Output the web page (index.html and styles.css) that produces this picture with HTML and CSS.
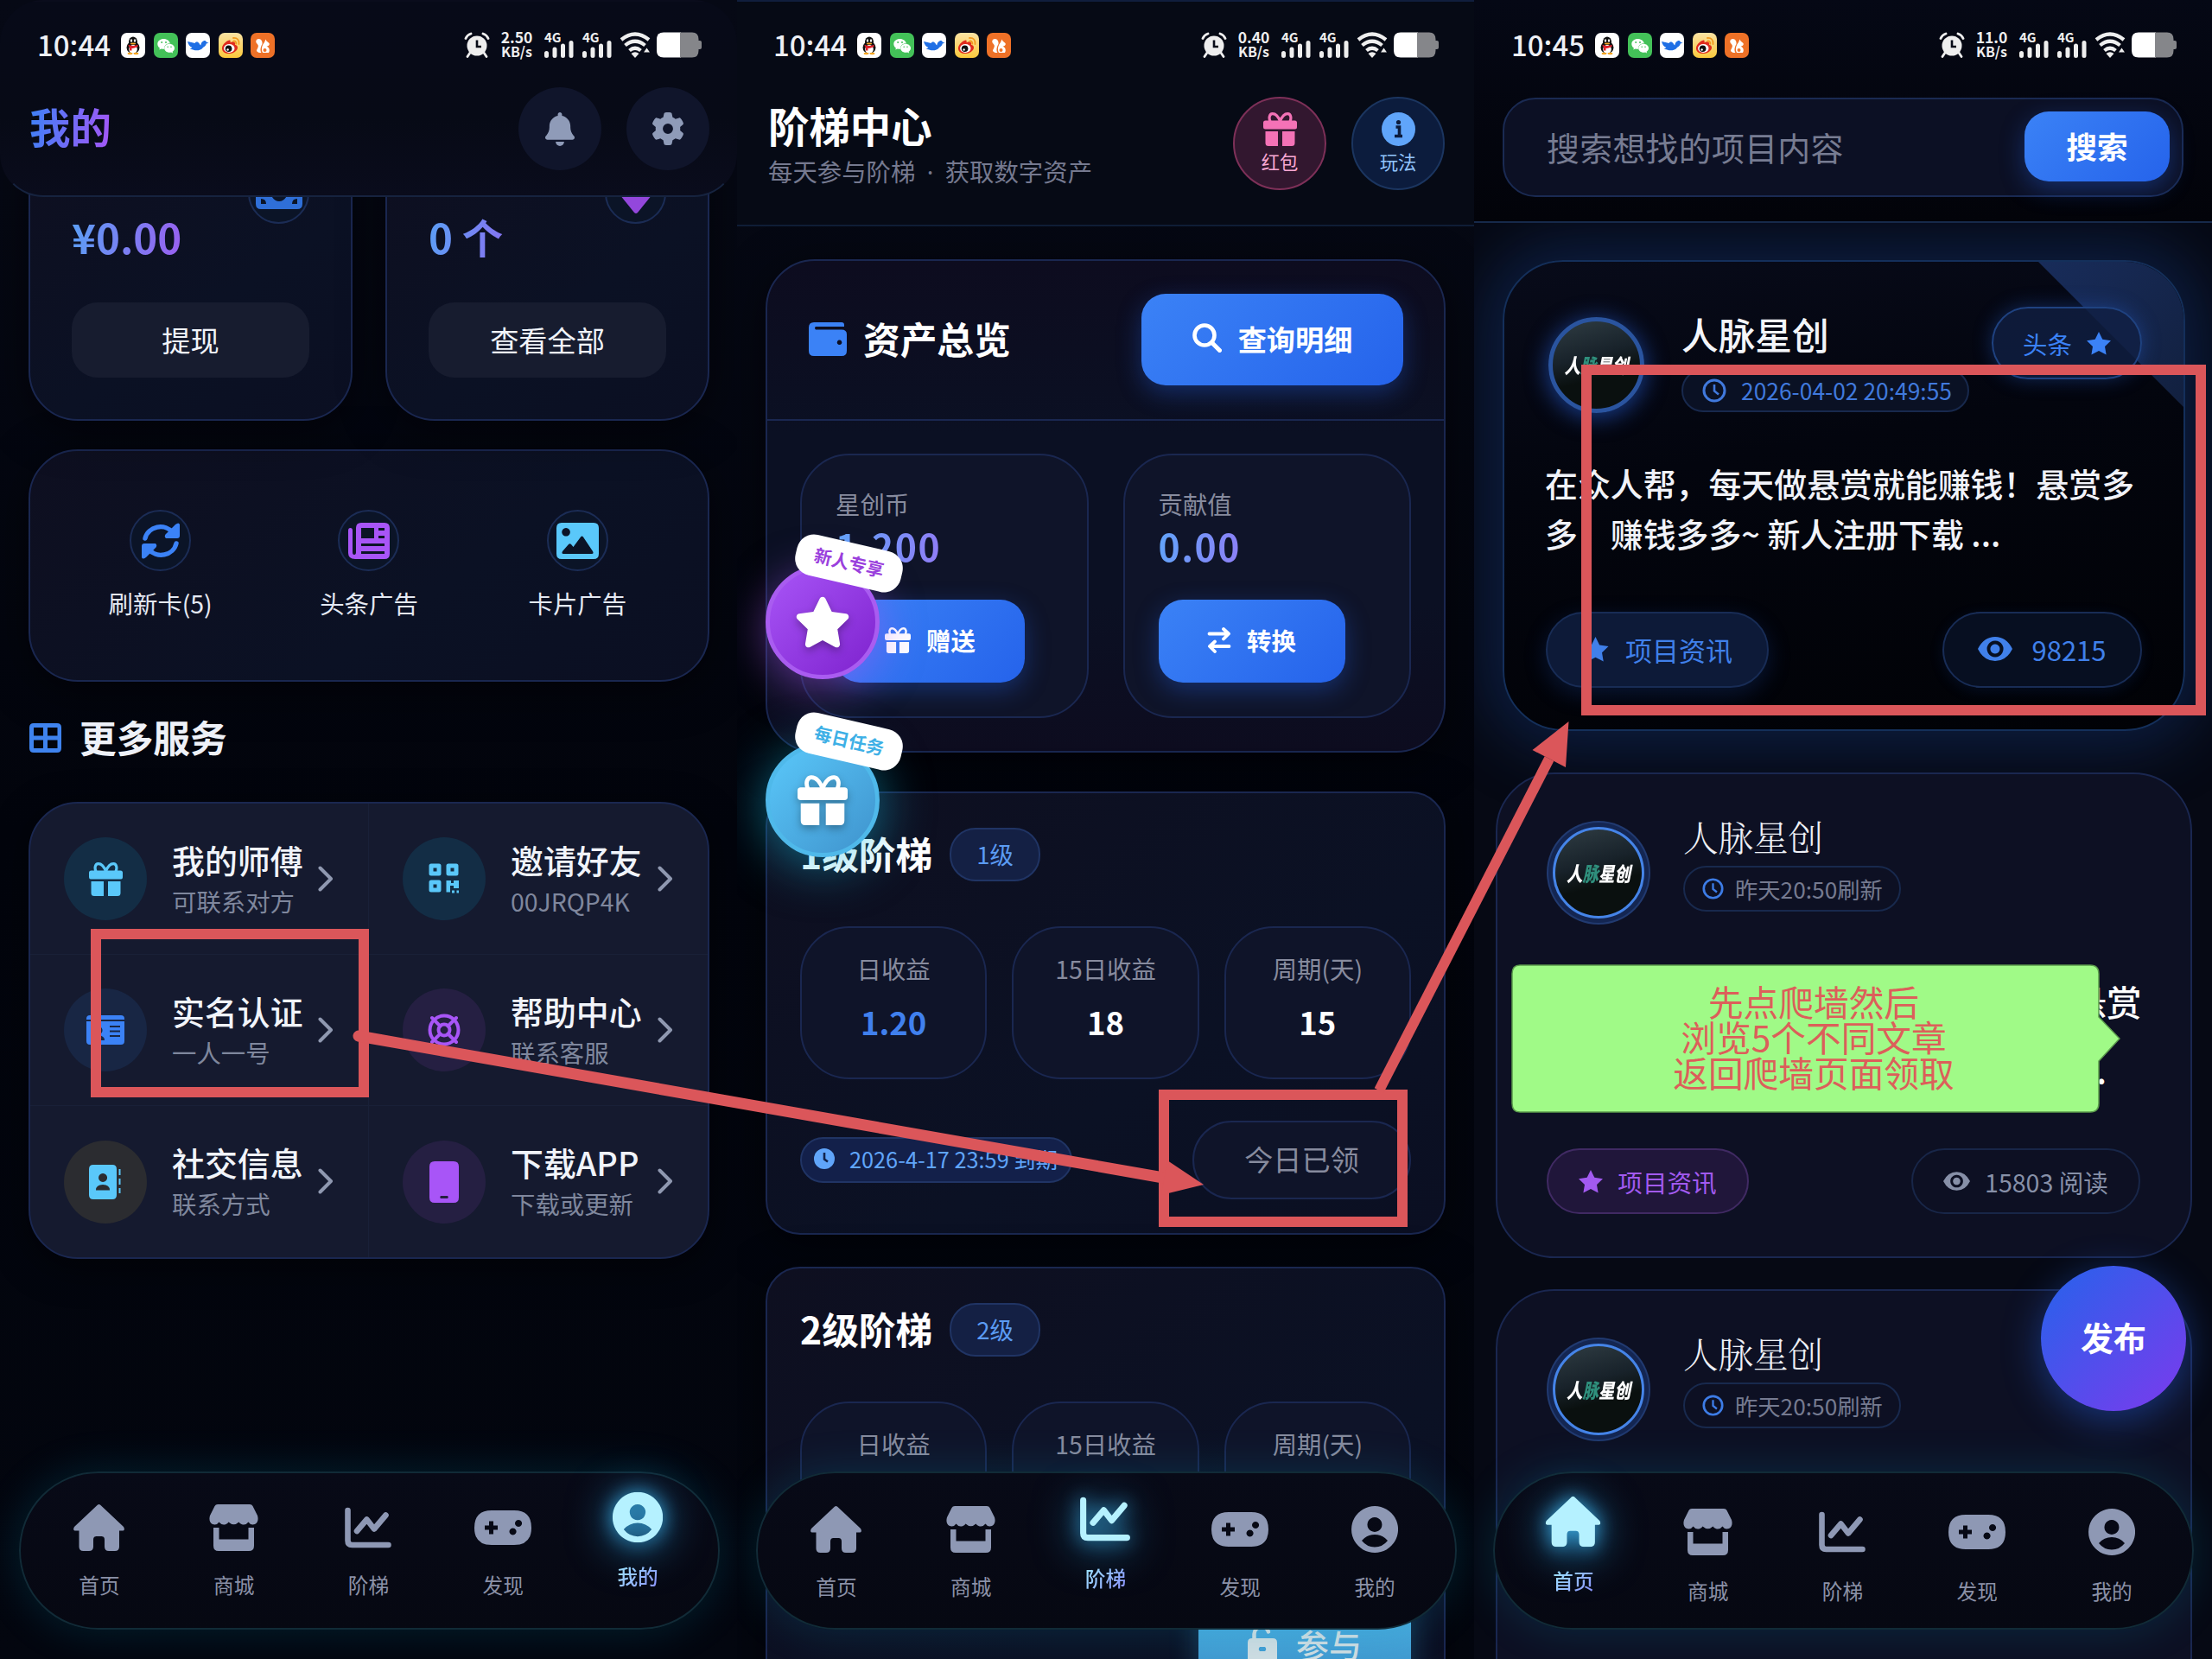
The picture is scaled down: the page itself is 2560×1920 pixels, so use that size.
FILE: index.html
```html
<!DOCTYPE html>
<html lang="zh-CN">
<head>
    <meta charset="UTF-8">
    <meta name="viewport" content="width=device-width, initial-scale=1.0">
    <title>人脉星创</title>
    <link rel="stylesheet" href="styles.css">
</head>
<body>
    <!-- Icon set -->
    <svg class="sprite" width="0" height="0">
        <symbol id="i-qq" viewBox="0 0 28 28">
            <ellipse cx="14" cy="16.500" rx="7.500" ry="7" fill="#111"/>
            <ellipse cx="14" cy="10" rx="5" ry="6" fill="#111"/>
            <ellipse cx="14" cy="18.500" rx="4.800" ry="5" fill="#fff"/>
            <ellipse cx="12" cy="8.500" rx="1.200" ry="1.700" fill="#fff"/>
            <ellipse cx="16" cy="8.500" rx="1.200" ry="1.700" fill="#fff"/>
            <ellipse cx="14" cy="12" rx="3.200" ry="1" fill="#f5a623"/>
            <path d="M8.500 13.200Q14 16 19.500 13.200V15.500Q14 18 12.500 17.300V20H10V16Q8.500 15.500 8.500 13.200Z" fill="#e0202a"/>
            <ellipse cx="10.500" cy="23.500" rx="3" ry="1.300" fill="#f5a623"/>
            <ellipse cx="17.500" cy="23.500" rx="3" ry="1.300" fill="#f5a623"/>
        </symbol>
        <symbol id="i-wechat" viewBox="0 0 28 28">
            <path d="M11.500 6.500c-4 0-7.200 2.600-7.200 5.900 0 1.900 1 3.500 2.600 4.600l-.6 2.100 2.400-1.200c.9.2 1.800.4 2.800.4h.6c-.7-4 3-6.700 6.700-6.500-.5-3-3.600-5.300-7.300-5.300z" fill="#fff"/>
            <path d="M24 17.300c0-2.800-2.700-5-5.900-5s-5.900 2.200-5.900 5 2.600 5 5.900 5c.7 0 1.400-.1 2-.3l2 1-.5-1.800c1.500-.9 2.400-2.300 2.400-3.900z" fill="#fff"/>
            <circle cx="9.200" cy="10.500" r="1" fill="#43c158"/><circle cx="14" cy="10.500" r="1" fill="#43c158"/>
            <circle cx="16.200" cy="15.800" r=".8" fill="#43c158"/><circle cx="20" cy="15.800" r=".8" fill="#43c158"/>
        </symbol>
        <symbol id="i-bird" viewBox="0 0 28 28">
            <path d="M2 9.500c3 1 6 1 8.500 2 1-1.500 2.500-1.800 3.800-1 1.500.9 1.700 2.500 3 3.500.2-2 1-4.400 3.500-5.300 1.500-.5 2.700.3 3.200 1.500l2.500 1-2.800.8c-.3 2-1.600 3.500-3.500 4.200-2 3-6 4-9.500 3.500-2.500-.6-4-1.500-6-1.500 1-.4 2-.9 2.700-1.600C4.500 15.500 3 13 2 9.500z" fill="#1f6fe5"/>
        </symbol>
        <symbol id="i-weibo" viewBox="0 0 28 28">
            <path d="M12.500 8c-4 .8-9 6-8.500 10 .6 4.500 5 6 9 5.500 5-.6 9-3.500 9-7 0-2-1.500-2.800-3-3.300.6-1.700 0-3-1.500-3.300-1.200-.2-2.600.2-4 .8.400-1.700.2-3-1-2.700z" fill="#e02b1d"/>
            <ellipse cx="12.300" cy="17.500" rx="6.200" ry="4.900" fill="#fff"/>
            <circle cx="11.600" cy="17.800" r="3.800" fill="#111"/><circle cx="10.600" cy="19" r="1.200" fill="#fff"/>
            <path d="M17 5.500q7-.5 6.500 7M17.500 9q3 0 2.800 3" fill="none" stroke="#f39a1e" stroke-width="1.800" stroke-linecap="round"/>
        </symbol>
        <symbol id="i-uc" viewBox="0 0 28 28">
            <path d="M13.500 12.500C14 10 12.500 6.500 9.500 6.500S5.500 9.500 7 11.500 9.500 14 8.500 16.500 6 20 8 21.500 12 22.500 12.500 22.500C11 20.500 11 16.500 13.500 12.500Z" fill="#fff"/>
            <path d="M16 10.500L17.500 7 18.500 9 21.500 11.500C22.500 13.500 20.500 15 18.500 15 22 16.500 22.500 20 21 22.500H14C12 19 13 14 16 10.500Z" fill="#fff"/>
            <circle cx="16.500" cy="19.500" r="2" fill="#f0742a"/>
        </symbol>
        <symbol id="i-alarm" viewBox="0 0 30 30">
            <circle cx="15" cy="16" r="11.500" fill="#eee"/>
            <path d="M2 7.500Q3.500 3.500 8 2M28 7.500Q26.500 3.500 22 2M7 24l-3 4.500M23 24l3 4.500" stroke="#eee" stroke-width="2.800" stroke-linecap="round" fill="none"/>
            <path d="M15 9.500V17h5" stroke="#080c18" stroke-width="2.600" fill="none"/>
        </symbol>
        <symbol id="i-bars" viewBox="0 0 34 20">
            <path d="M2.500 14.500V17.500M12 10V17.500M21.500 6V17.500M31 2.500V17.500" stroke="#eee" stroke-width="5" stroke-linecap="round"/>
        </symbol>
        <symbol id="i-wifi" viewBox="0 0 36 30">
            <path d="M2 9Q18-4 34 9M6.500 15.500Q18 6 29.500 15.500M11.500 21.500Q18 16 24.500 21.500" stroke="#eee" stroke-width="4.200" fill="none"/>
            <path d="M13.500 25Q18 21.500 22.500 25L18 30Z" fill="#eee"/>
            <path d="M28 23.500L31.500 18.500 35 23.500Z" fill="#eee"/>
        </symbol>
        <symbol id="i-battery" viewBox="0 0 52 30">
            <path d="M8 .5H28V29.500H8Q0 29.500 0 21.500V8.500Q0 .5 8 .5Z" fill="#fff"/>
            <path d="M27 .5H41Q48.500 .5 48.500 8.500V10H50Q52 10 52 12V18Q52 20 50 20H48.500V21.500Q48.500 29.500 41 29.500H27Z" fill="#85868a"/>
        </symbol>

        <symbol id="i-home" viewBox="0 0 59 54">
            <path d="M29.500 0Q31 0 32 1.500L58 26Q60.500 30.500 56 30.500H53V49Q53 54 48 54H41Q36 54 36 49V41Q36 37 32.500 37H26.500Q23 37 23 41V49Q23 54 18 54H11.500Q6.500 54 6.500 49V30.500H3Q-1.500 30.500 1 26L27 1.500Q28 0 29.500 0Z"/>
        </symbol>
        <symbol id="i-store" viewBox="0 0 57 54">
            <path d="M10 0H47Q49.500 0 50.500 2L56 13Q58 20 53 23Q48 24.500 45.500 20.500Q42 25 37.500 23Q35.500 22 34.500 20.500Q28.500 26 22.500 20.500Q21.500 22 19.500 23Q15 25 11.500 20.500Q9 24.500 4 23Q-1 20 1 13L6.500 2Q7.500 0 10 0Z"/>
            <path d="M5 27H11.500V40.500H45.500V27H52V48Q52 54 46 54H11Q5 54 5 48Z"/>
        </symbol>
        <symbol id="i-chart" viewBox="0 0 54 54">
            <path d="M3.500 7V42Q3.500 47 8.500 47H50.500M14 31L25.500 17.500 34 28.500 47.500 12.500" fill="none" stroke="currentColor" stroke-width="6.600" stroke-linecap="round" stroke-linejoin="round"/>
        </symbol>
        <symbol id="i-game" viewBox="0 0 66 54">
            <path fill-rule="evenodd" d="M20 7H46Q66 7 66 27T46 47H20Q0 47 0 27T20 7ZM17 19.500V24.500H12V29.500H17V34.500H22V29.500H27V24.500H22V19.500ZM51 18a4 4 0 1 0 .1 0ZM44.500 27.500a4 4 0 1 0 .1 0Z"/>
        </symbol>
        <symbol id="i-user" viewBox="0 0 54 54">
            <path fill-rule="evenodd" d="M27 0a27 27 0 1 0 .1 0ZM27 13a8.500 8.500 0 1 1-.1 0ZM27 33Q36 33 42 40Q36 47.500 27 47.500T12 40Q18 33 27 33Z"/>
        </symbol>
        <symbol id="i-gift" viewBox="0 0 39 39">
            <path d="M19.500 10.500C17 4 13.500 1.500 10.500 1.700S6 6 8 10.500M19.500 10.500C22 4 25.500 1.500 28.500 1.700S33 6 31 10.500" fill="none" stroke="currentColor" stroke-width="3.200"/>
            <rect y="9.500" width="39" height="10" rx="2.500"/>
            <path d="M2.500 22H17V39H6Q2.500 39 2.500 35.500ZM22 22H36.500V35.500Q36.500 39 33 39H22Z"/>
        </symbol>
        <symbol id="i-bell" viewBox="0 0 448 512">
            <path d="M224 0c-17.700 0-32 14.300-32 32V51.200C119 66 64 130.600 64 208v18.800c0 47-17.300 92.400-48.500 127.600l-7.400 8.300c-8.400 9.400-10.400 22.900-5.300 34.400S19.400 416 32 416H416c12.600 0 24-7.400 29.200-18.900s3.100-25-5.300-34.400l-7.400-8.300C401.300 319.200 384 273.900 384 226.800V208c0-77.400-55-142-128-156.800V32c0-17.700-14.300-32-32-32zm45.300 493.300c12-12 18.700-28.300 18.700-45.300H160c0 17 6.700 33.300 18.700 45.300s28.300 18.700 45.300 18.700s33.300-6.700 45.300-18.700z"/>
        </symbol>
        <symbol id="i-gear" viewBox="0 0 512 512">
            <path d="M495.900 166.600c3.200 8.700 .5 18.400-6.400 24.600l-43.300 39.400c1.100 8.300 1.700 16.800 1.700 25.400s-.6 17.100-1.700 25.400l43.300 39.400c6.900 6.200 9.600 15.900 6.400 24.600c-4.400 11.900-9.700 23.300-15.800 34.300l-4.700 8.100c-6.600 11-14 21.400-22.100 31.200c-5.900 7.200-15.700 9.600-24.500 6.800l-55.700-17.700c-13.400 10.300-28.200 18.900-44 25.400l-12.500 57.100c-2 9.100-9 16.300-18.200 17.800c-13.800 2.300-28 3.500-42.500 3.500s-28.700-1.200-42.500-3.500c-9.200-1.500-16.200-8.700-18.200-17.800l-12.500-57.100c-15.800-6.500-30.600-15.100-44-25.400L83.100 425.900c-8.800 2.800-18.600 .3-24.500-6.800c-8.100-9.800-15.500-20.200-22.100-31.200l-4.700-8.100c-6.100-11-11.400-22.400-15.800-34.300c-3.200-8.700-.5-18.400 6.400-24.600l43.300-39.400C64.600 273.100 64 264.600 64 256s.6-17.100 1.700-25.400L22.400 191.200c-6.900-6.200-9.600-15.900-6.400-24.600c4.400-11.900 9.700-23.300 15.800-34.300l4.700-8.100c6.600-11 14-21.400 22.100-31.200c5.900-7.200 15.700-9.600 24.500-6.800l55.700 17.700c13.400-10.300 28.200-18.900 44-25.400l12.500-57.100c2-9.100 9-16.300 18.200-17.800C227.300 1.200 241.500 0 256 0s28.700 1.200 42.500 3.500c9.200 1.500 16.200 8.700 18.200 17.800l12.500 57.100c15.800 6.500 30.600 15.100 44 25.400l55.700-17.700c8.800-2.800 18.600-.3 24.500 6.800c8.100 9.800 15.500 20.200 22.100 31.200l4.700 8.100c6.100 11 11.400 22.400 15.800 34.300zM256 336a80 80 0 1 0 0-160 80 80 0 1 0 0 160z"/>
        </symbol>
        <symbol id="i-cash" viewBox="0 0 54 36">
            <path fill-rule="evenodd" d="M6 0H48Q54 0 54 6V30Q54 36 48 36H6Q0 36 0 30V6Q0 0 6 0ZM6 24V30H12Q12 24 6 24ZM42 30H48V24Q42 24 42 30ZM27 9a9 9 0 1 0 .1 0Z"/>
        </symbol>
        <symbol id="i-gem" viewBox="0 0 54 46">
            <path d="M11 0H43L54 14 29 45Q27 47 25 45L0 14Z"/>
        </symbol>
        <symbol id="i-rotate" viewBox="0 0 46 42">
            <path d="M5 18A18 17 0 0 1 37 11.500M41 24A18 17 0 0 1 9 30.500" fill="none" stroke="currentColor" stroke-width="5.400" stroke-linecap="round"/>
            <path d="M45 2V15Q45 18 42 18H29Q26 15 30 12L40 2Q44-1 45 2ZM1 40V27Q1 24 4 24H17Q20 27 16 30L6 40Q2 43 1 40Z"/>
        </symbol>
        <symbol id="i-news" viewBox="0 0 48 42">
            <path fill-rule="evenodd" d="M15 0H42Q48 0 48 6V36Q48 42 42 42H8Q0 42 0 35V9Q0 6 2.500 6T5 9V34Q5 37 7 37T9 34V6Q9 0 15 0ZM15 6V18H30V6ZM35 6V9H42V6ZM35 15V18H42V15ZM15 24V27H42V24ZM15 33V36H42V33Z"/>
        </symbol>
        <symbol id="i-image" viewBox="0 0 49 42">
            <path fill-rule="evenodd" d="M6 0H43Q49 0 49 6V36Q49 42 43 42H6Q0 42 0 36V6Q0 0 6 0ZM11 6a4.800 4.800 0 1 0 .1 0ZM8 36H41Q43.500 36 42 33L31 16.500Q29.500 14.500 28 16.500L19.500 28 17 25Q15.500 23.500 14 25L7 33Q5.500 36 8 36Z"/>
        </symbol>
        <symbol id="i-grid" viewBox="0 0 37 34">
            <path fill-rule="evenodd" d="M5 0H32Q37 0 37 5V29Q37 34 32 34H5Q0 34 0 29V5Q0 0 5 0ZM5 5V14.500H16V5ZM21 5V14.500H32.500V5ZM5 19.500V29H16V19.500ZM21 19.500V29H32.500V19.500Z"/>
        </symbol>
        <symbol id="i-qr" viewBox="0 0 36 36">
            <path d="M3 3H12V12H3ZM23 3H32V12H23ZM3 22H12V31H3Z" fill="none" stroke="currentColor" stroke-width="5" stroke-linejoin="round"/>
            <path d="M20.500 20H26V23H29V20H35V29H29V26H25V33.500H20.500ZM27 31.500H30V34.500H27ZM32.500 31.500H35V34.500H32.500Z"/>
        </symbol>
        <symbol id="i-idcard" viewBox="0 0 44 34">
            <path fill-rule="evenodd" d="M4 0H40Q44 0 44 4V5H0V4Q0 0 4 0ZM0 7H44V30Q44 34 40 34H4Q0 34 0 30ZM14 13a4.500 4.500 0 1 0 .1 0ZM7 29H21Q21 23.500 14 23.500T7 29ZM27 12V14H39V12ZM27 17.500V19.500H39V17.500ZM27 23V25H39V23Z"/>
        </symbol>
        <symbol id="i-ring" viewBox="0 0 40 40">
            <g fill="none" stroke="currentColor" stroke-width="4">
                <circle cx="20" cy="20" r="16.500"/><circle cx="20" cy="20" r="6.500"/>
                <path d="M6 6L15.500 15.500M34 6L24.500 15.500M6 34L15.500 24.500M34 34L24.500 24.500" stroke-linecap="round"/>
            </g>
        </symbol>
        <symbol id="i-book" viewBox="0 0 38 40">
            <path fill-rule="evenodd" d="M5 0H27Q32 0 32 5V35Q32 40 27 40H5Q0 40 0 35V5Q0 0 5 0ZM16 10a5 5 0 1 0 .1 0ZM8 29.500H24Q24 23 16 23T8 29.500ZM34.500 5h2v7h-2ZM34.500 16h2v7h-2ZM34.500 27h2v6h-2Z"/>
        </symbol>
        <symbol id="i-phone" viewBox="0 0 34 48">
            <path fill-rule="evenodd" d="M6 0H28Q34 0 34 6V42Q34 48 28 48H6Q0 48 0 42V6Q0 0 6 0ZM13 40Q11.500 41.500 13 43H21Q22.500 41.500 21 40Z"/>
        </symbol>
        <symbol id="i-chevron" viewBox="0 0 18 30">
            <path d="M2.500 2.500L15 15 2.500 27.500" fill="none" stroke="currentColor" stroke-width="4" stroke-linecap="round" stroke-linejoin="round"/>
        </symbol>
        <symbol id="i-info" viewBox="0 0 39 39">
            <circle cx="19.500" cy="19.500" r="19.500"/>
            <path d="M16.500 17H20.500V27M15 27.500H24" fill="none" stroke="#0c1c3d" stroke-width="3.600"/><circle cx="19.500" cy="11.500" r="2.600" fill="#0c1c3d"/>
        </symbol>
        <symbol id="i-wallet" viewBox="0 0 44 39">
            <path fill-rule="evenodd" d="M6 0H38Q41 0 41 3V5H8Q6 6.500 8 8.500H38Q44 8.500 44 14V33Q44 39 38 39H6Q0 39 0 33V6Q0 0 6 0ZM35.500 20.500a2.800 2.800 0 1 0 .1 0Z"/>
        </symbol>
        <symbol id="i-search" viewBox="0 0 34 34">
            <circle cx="14" cy="14" r="11.500" fill="none" stroke="currentColor" stroke-width="4.600"/><path d="M23 23L31.500 31.500" stroke="currentColor" stroke-width="5" stroke-linecap="round"/>
        </symbol>
        <symbol id="i-swap" viewBox="0 0 28 30">
            <path d="M2.500 7.500H24M19 2L25 7.500 19 13.500M25.500 22H4M9 16.500L3 22 9 28" fill="none" stroke="currentColor" stroke-width="3.800" stroke-linecap="round" stroke-linejoin="round"/>
        </symbol>
        <symbol id="i-star" viewBox="0 0 576 512">
            <path d="M316.900 18C311.600 7 300.400 0 288.100 0s-23.400 7-28.800 18L195 150.300 51.400 171.500c-12 1.800-22 10.200-25.700 21.700s-.7 24.200 7.900 32.700L137.800 329 113.200 474.700c-2 12 3 24.200 12.900 31.300s23 8 33.800 2.300l128.300-68.500 128.300 68.500c10.800 5.700 23.900 4.900 33.800-2.300s14.900-19.300 12.900-31.300L438.500 329 542.700 225.900c8.600-8.500 11.700-21.200 7.900-32.700s-13.700-19.900-25.700-21.700L381.200 150.300 316.900 18z"/>
        </symbol>
        <symbol id="i-star2" viewBox="0 0 28 27">
            <path d="M14 0L18.300 8.800 28 10.200 21 17 22.600 26.600 14 22 5.400 26.600 7 17 0 10.200 9.700 8.800Z"/>
        </symbol>
        <symbol id="i-clock" viewBox="0 0 28 28">
            <circle cx="14" cy="14" r="12" fill="none" stroke="currentColor" stroke-width="3"/><path d="M14 7V14.500L19 18.500" fill="none" stroke="currentColor" stroke-width="2.600"/>
        </symbol>
        <symbol id="i-clock-fill" viewBox="0 0 24 24">
            <circle cx="12" cy="12" r="12"/><path d="M12 5V12.500L16 15.500" fill="none" stroke="#13244d" stroke-width="2.600"/>
        </symbol>
        <symbol id="i-eye" viewBox="0 0 40 28">
            <path fill-rule="evenodd" d="M20 0Q33 0 40 14Q33 28 20 28T0 14Q7 0 20 0ZM20 4.500a9.500 9.500 0 1 0 .1 0ZM20 8.500a5.500 5.500 0 1 1-.1 0Z"/>
        </symbol>
        <symbol id="i-unlock" viewBox="0 0 36 44">
            <path d="M7.500 17V11A8.500 8.500 0 0 1 24 8.500" fill="none" stroke="currentColor" stroke-width="4.500" stroke-linecap="round"/>
            <path fill-rule="evenodd" d="M5 16H29Q34 16 34 21V39Q34 44 29 44H5Q0 44 0 39V21Q0 16 5 16ZM14 26Q11.500 28.500 14 31H20Q22.500 28.500 20 26Z"/>
        </symbol>
    </svg>

    <main class="board">
        <!-- 我的 -->
        <section class="phone phone-mine">
            <header class="top top-mine">
                <div class="status">
                    <span class="time">10:44</span>
                    <span class="app qq"><svg><use href="#i-qq"/></svg></span>
                    <span class="app wechat"><svg><use href="#i-wechat"/></svg></span>
                    <span class="app bird"><svg><use href="#i-bird"/></svg></span>
                    <span class="app weibo"><svg><use href="#i-weibo"/></svg></span>
                    <span class="app uc"><svg><use href="#i-uc"/></svg></span>
                    <svg class="alarm"><use href="#i-alarm"/></svg>
                    <span class="speed"><b>2.50</b><i>KB/s</i></span>
                    <span class="signal"><b>4G</b><svg><use href="#i-bars"/></svg></span>
                    <span class="signal"><b>4G</b><svg><use href="#i-bars"/></svg></span>
                    <svg class="wifi"><use href="#i-wifi"/></svg>
                    <svg class="battery"><use href="#i-battery"/></svg>
                </div>
                <div class="top-row">
                    <h1 class="grad">我的</h1>
                    <button class="round"><svg class="bell"><use href="#i-bell"/></svg></button>
                    <button class="round"><svg class="gear"><use href="#i-gear"/></svg></button>
                </div>
            </header>

            <div class="balance-row">
                <div class="card balance">
                    <span class="ring"><svg class="cash"><use href="#i-cash"/></svg></span>
                    <div class="amount"><span class="grad-soft">¥0.00</span></div>
                    <button class="ghost">提现</button>
                </div>
                <div class="card balance">
                    <span class="ring"><svg class="gem"><use href="#i-gem"/></svg></span>
                    <div class="amount"><span class="grad-soft wide">0 个</span></div>
                    <button class="ghost">查看全部</button>
                </div>
            </div>

            <div class="card ads">
                <div class="ad"><span class="ring blue"><svg width="46" height="42"><use href="#i-rotate"/></svg></span>刷新卡(5)</div>
                <div class="ad"><span class="ring purple"><svg width="48" height="42"><use href="#i-news"/></svg></span>头条广告</div>
                <div class="ad"><span class="ring sky"><svg width="49" height="42"><use href="#i-image"/></svg></span>卡片广告</div>
            </div>

            <h2 class="more"><svg width="37" height="34"><use href="#i-grid"/></svg>更多服务</h2>

            <div class="services">
                <div class="service">
                    <span class="disc teal"><svg width="39" height="39"><use href="#i-gift"/></svg></span>
                    <div class="service-text"><b>我的师傅</b><small>可联系对方</small></div>
                    <svg class="chevron"><use href="#i-chevron"/></svg>
                </div>
                <div class="service">
                    <span class="disc teal"><svg width="36" height="36"><use href="#i-qr"/></svg></span>
                    <div class="service-text"><b>邀请好友</b><small>00JRQP4K</small></div>
                    <svg class="chevron"><use href="#i-chevron"/></svg>
                </div>
                <div class="service">
                    <span class="disc navy"><svg width="44" height="34"><use href="#i-idcard"/></svg></span>
                    <div class="service-text"><b>实名认证</b><small>一人一号</small></div>
                    <svg class="chevron"><use href="#i-chevron"/></svg>
                </div>
                <div class="service">
                    <span class="disc violet"><svg width="40" height="40"><use href="#i-ring"/></svg></span>
                    <div class="service-text"><b>帮助中心</b><small>联系客服</small></div>
                    <svg class="chevron"><use href="#i-chevron"/></svg>
                </div>
                <div class="service">
                    <span class="disc grey"><svg width="38" height="40"><use href="#i-book"/></svg></span>
                    <div class="service-text"><b>社交信息</b><small>联系方式</small></div>
                    <svg class="chevron"><use href="#i-chevron"/></svg>
                </div>
                <div class="service">
                    <span class="disc violet"><svg width="34" height="48"><use href="#i-phone"/></svg></span>
                    <div class="service-text"><b>下载APP</b><small>下载或更新</small></div>
                    <svg class="chevron"><use href="#i-chevron"/></svg>
                </div>
            </div>

            <nav class="tabbar">
                <a class="tab"><svg width="59" height="54"><use href="#i-home"/></svg><span>首页</span></a>
                <a class="tab"><svg width="57" height="54"><use href="#i-store"/></svg><span>商城</span></a>
                <a class="tab"><svg width="54" height="54"><use href="#i-chart"/></svg><span>阶梯</span></a>
                <a class="tab"><svg width="66" height="54"><use href="#i-game"/></svg><span>发现</span></a>
                <a class="tab active"><svg width="54" height="54"><use href="#i-user"/></svg><span>我的</span></a>
            </nav>
        </section>

        <!-- 阶梯中心 -->
        <section class="phone phone-ladder">
            <header class="top top-ladder">
                <div class="status">
                    <span class="time">10:44</span>
                    <span class="app qq"><svg><use href="#i-qq"/></svg></span>
                    <span class="app wechat"><svg><use href="#i-wechat"/></svg></span>
                    <span class="app bird"><svg><use href="#i-bird"/></svg></span>
                    <span class="app weibo"><svg><use href="#i-weibo"/></svg></span>
                    <span class="app uc"><svg><use href="#i-uc"/></svg></span>
                    <svg class="alarm"><use href="#i-alarm"/></svg>
                    <span class="speed"><b>0.40</b><i>KB/s</i></span>
                    <span class="signal"><b>4G</b><svg><use href="#i-bars"/></svg></span>
                    <span class="signal"><b>4G</b><svg><use href="#i-bars"/></svg></span>
                    <svg class="wifi"><use href="#i-wifi"/></svg>
                    <svg class="battery"><use href="#i-battery"/></svg>
                </div>
                <div class="top-row">
                    <div class="titles">
                        <h1>阶梯中心</h1>
                        <p>每天参与阶梯 <span class="dot">·</span> 获取数字资产</p>
                    </div>
                    <button class="bubble pink"><svg><use href="#i-gift"/></svg>红包</button>
                    <button class="bubble blue"><svg><use href="#i-info"/></svg>玩法</button>
                </div>
            </header>

            <div class="card assets">
                <div class="assets-head">
                    <svg width="44" height="39"><use href="#i-wallet"/></svg>
                    <h2>资产总览</h2>
                    <button class="primary detail"><svg width="34" height="34"><use href="#i-search"/></svg>查询明细</button>
                </div>
                <div class="assets-body">
                    <div class="asset">
                        <label>星创币</label>
                        <div class="num"><span class="grad-asset">1.200</span></div>
                        <button class="primary send"><svg width="30" height="30"><use href="#i-gift"/></svg>赠送</button>
                    </div>
                    <div class="asset">
                        <label>贡献值</label>
                        <div class="num"><span class="grad-asset">0.00</span></div>
                        <button class="primary"><svg width="28" height="30"><use href="#i-swap"/></svg>转换</button>
                    </div>
                </div>
            </div>

            <div class="card level">
                <div class="level-head"><h2>1级阶梯</h2><span class="badge">1级</span></div>
                <div class="stats">
                    <div class="stat"><label>日收益</label><b class="hl">1.20</b></div>
                    <div class="stat"><label>15日收益</label><b>18</b></div>
                    <div class="stat"><label>周期(天)</label><b>15</b></div>
                </div>
                <div class="level-foot">
                    <span class="expire"><svg width="24" height="24"><use href="#i-clock-fill"/></svg>2026-4-17 23:59 到期</span>
                    <button class="claimed">今日已领</button>
                </div>
            </div>

            <div class="card level level-2">
                <div class="level-head"><h2>2级阶梯</h2><span class="badge">2级</span></div>
                <div class="stats">
                    <div class="stat"><label>日收益</label></div>
                    <div class="stat"><label>15日收益</label></div>
                    <div class="stat"><label>周期(天)</label></div>
                </div>
                <div class="join-row">
                    <button class="join"><svg width="36" height="44"><use href="#i-unlock"/></svg>参与</button>
                </div>
            </div>

            <!-- Floating entries -->
            <div class="floaty newbie"><svg width="66" height="60"><use href="#i-star"/></svg><span>新人专享</span></div>
            <div class="floaty daily"><svg width="58" height="58"><use href="#i-gift"/></svg><span>每日任务</span></div>

            <nav class="tabbar">
                <a class="tab"><svg width="59" height="54"><use href="#i-home"/></svg><span>首页</span></a>
                <a class="tab"><svg width="57" height="54"><use href="#i-store"/></svg><span>商城</span></a>
                <a class="tab active"><svg width="54" height="54"><use href="#i-chart"/></svg><span>阶梯</span></a>
                <a class="tab"><svg width="66" height="54"><use href="#i-game"/></svg><span>发现</span></a>
                <a class="tab"><svg width="54" height="54"><use href="#i-user"/></svg><span>我的</span></a>
            </nav>
        </section>

        <!-- 首页 -->
        <section class="phone phone-home">
            <header class="top top-home">
                <div class="status">
                    <span class="time">10:45</span>
                    <span class="app qq"><svg><use href="#i-qq"/></svg></span>
                    <span class="app wechat"><svg><use href="#i-wechat"/></svg></span>
                    <span class="app bird"><svg><use href="#i-bird"/></svg></span>
                    <span class="app weibo"><svg><use href="#i-weibo"/></svg></span>
                    <span class="app uc"><svg><use href="#i-uc"/></svg></span>
                    <svg class="alarm"><use href="#i-alarm"/></svg>
                    <span class="speed"><b>11.0</b><i>KB/s</i></span>
                    <span class="signal"><b>4G</b><svg><use href="#i-bars"/></svg></span>
                    <span class="signal"><b>4G</b><svg><use href="#i-bars"/></svg></span>
                    <svg class="wifi"><use href="#i-wifi"/></svg>
                    <svg class="battery"><use href="#i-battery"/></svg>
                </div>
                <div class="search">
                    <span>搜索想找的项目内容</span>
                    <button class="primary">搜索</button>
                </div>
            </header>

            <article class="headline">
                <div class="post-head">
                    <span class="avatar"><em>人<i>脉</i>星创</em></span>
                    <div class="who">
                        <b>人脉星创</b>
                        <span class="when"><svg width="28" height="28"><use href="#i-clock"/></svg>2026-04-02 20:49:55</span>
                    </div>
                    <span class="toutiao">头条<svg width="28" height="27"><use href="#i-star2"/></svg></span>
                </div>
                <p>在众人帮，每天做悬赏就能赚钱！悬赏多多，赚钱多多~ 新人注册下载 ...</p>
                <div class="post-foot">
                    <span class="tag"><svg width="31" height="29"><use href="#i-star2"/></svg>项目资讯</span>
                    <span class="views"><svg width="40" height="28"><use href="#i-eye"/></svg>98215</span>
                </div>
            </article>

            <article class="post">
                <div class="post-head">
                    <span class="avatar"><em>人<i>脉</i>星创</em></span>
                    <div class="who">
                        <b>人脉星创</b>
                        <span class="when"><svg width="25" height="25"><use href="#i-clock"/></svg>昨天20:50刷新</span>
                    </div>
                </div>
                <p>在众人帮，每天做悬赏就能赚钱！悬赏<span class="tail">多多，赚钱多多~ 新人注册下载 ...</span></p>
                <div class="post-foot">
                    <span class="tag"><svg width="28" height="27"><use href="#i-star2"/></svg>项目资讯</span>
                    <span class="views"><svg width="31" height="22"><use href="#i-eye"/></svg>15803 阅读</span>
                </div>
            </article>

            <article class="post post-last">
                <div class="post-head">
                    <span class="avatar"><em>人<i>脉</i>星创</em></span>
                    <div class="who">
                        <b>人脉星创</b>
                        <span class="when"><svg width="25" height="25"><use href="#i-clock"/></svg>昨天20:50刷新</span>
                    </div>
                </div>
            </article>

            <button class="publish">发布</button>

            <nav class="tabbar">
                <a class="tab active"><svg width="59" height="54"><use href="#i-home"/></svg><span>首页</span></a>
                <a class="tab"><svg width="57" height="54"><use href="#i-store"/></svg><span>商城</span></a>
                <a class="tab"><svg width="54" height="54"><use href="#i-chart"/></svg><span>阶梯</span></a>
                <a class="tab"><svg width="66" height="54"><use href="#i-game"/></svg><span>发现</span></a>
                <a class="tab"><svg width="54" height="54"><use href="#i-user"/></svg><span>我的</span></a>
            </nav>
        </section>

        <!-- Tutorial markers -->
        <svg class="marks" viewBox="0 0 2560 1920">
            <g fill="none" stroke="#db565a" stroke-width="12">
                <rect x="111" y="1081" width="310" height="183"/>
                <rect x="1347" y="1267" width="276" height="147"/>
                <rect x="1836" y="428" width="711" height="394"/>
                <path d="M415 1199L1352 1364" stroke-width="13" stroke-linecap="round"/>
                <path d="M1596 1262L1793 878"/>
            </g>
            <path d="M1393 1371L1351 1343 1344 1383ZM1815.500 835L1773.500 868 1812 888Z" fill="#db565a"/>
        </svg>
        <div class="note">
            <svg viewBox="0 0 705 172"><path d="M10 1H670Q680 1 680 11V61L704 86 680 112V161Q680 171 670 171H10Q1 171 1 161V11Q1 1 10 1Z"/></svg>
            <p>先点爬墙然后<br>浏览5个不同文章<br>返回爬墙页面领取</p>
        </div>
    </main>
</body>
</html>
```

FILE: styles.css
```css
* {
    box-sizing: border-box;
    margin: 0;
    padding: 0;
}

body {
    font-family: "Noto Sans CJK SC", "Noto Sans", sans-serif;
    background: #03050e;
    color: #fff;
    width: 2560px;
    height: 1920px;
    overflow: hidden;
}

button {
    font-family: inherit;
    border: none;
    color: inherit;
    display: flex;
    align-items: center;
    justify-content: center;
}

svg {
    display: block;
    flex: none;
    fill: currentColor;
}

.sprite {
    position: absolute;
}

.board {
    position: relative;
    display: flex;
    height: 1920px;
}

.phone {
    position: relative;
    flex: none;
    width: 853px;
    height: 1920px;
    overflow: hidden;
    background: linear-gradient(180deg, #060915 0%, #02040c 50%, #03060f 100%);
}

/* status bar */
.status {
    display: flex;
    align-items: center;
    height: 30px;
    margin: 37px 41px 0 43px;
}

.time {
    font-size: 33px;
    line-height: 30px;
    font-weight: 500;
    color: #eef0f5;
    width: 97px;
    padding-bottom: 3px;
}

.app {
    width: 28px;
    height: 29px;
    border-radius: 7px;
    margin-right: 9.500px;
    overflow: hidden;
    background: #fff;
}

.app svg {
    width: 28px;
    height: 29px;
}

.app.wechat { background: #43c158; }
.app.weibo { background: linear-gradient(#fbe3a4, #fbc93c); }
.app.uc { background: #ee7127; }

.alarm {
    width: 30px;
    height: 30px;
    margin-left: auto;
}

.speed {
    width: 38px;
    margin-left: 12px;
    display: flex;
    flex-direction: column;
    align-items: center;
    color: #eee;
    padding-bottom: 2px;
}

.speed b {
    font-size: 17.500px;
    line-height: 17px;
    font-weight: 600;
}

.speed i {
    font-style: normal;
    font-size: 16px;
    line-height: 17px;
    font-weight: 600;
}

.signal {
    position: relative;
    width: 34px;
    height: 30px;
    margin-left: 10px;
    display: flex;
    align-items: flex-end;
}

.speed + .signal {
    margin-left: 13px;
}

.signal b {
    position: absolute;
    left: 0;
    top: -2px;
    font-size: 15px;
    line-height: 15px;
    color: #eee;
}

.signal svg {
    width: 34px;
    height: 20px;
}

.wifi {
    width: 36px;
    height: 30px;
    margin-left: 9px;
}

.battery {
    width: 52px;
    height: 30px;
    margin-left: 7px;
}

/* shared */
.card {
    border: 2px solid #1a2750;
    border-radius: 57px;
    background: linear-gradient(145deg, #0e0f20 0%, #0b1124 60%, #0b0f22 100%);
    box-shadow: 0 10px 50px rgba(0, 0, 0, .5);
}

.grad, .grad-soft, .grad-asset {
    background: linear-gradient(100deg, #3b82f6, #a855f7);
    -webkit-background-clip: text;
    background-clip: text;
    color: transparent;
}

.grad-soft {
    background-image: linear-gradient(100deg, #5aa0f5, #9a5ff0);
}

.grad-soft.wide {
    padding-right: 40px;
}

.grad-asset {
    background-image: linear-gradient(100deg, #60a5fa, #a06ff5);
    padding-right: 40px;
}

.primary {
    background: linear-gradient(135deg, #3b82f6, #2563eb);
    border-radius: 28px;
    font-weight: 600;
    padding-bottom: 3px;
    box-shadow: 0 9px 28px rgba(37, 99, 235, .35);
}

.top {
    position: relative;
    z-index: 2;
    display: flow-root;
}

h1 {
    font-size: 47.400px;
    line-height: 56px;
    font-weight: 700;
}

h2 {
    font-size: 42.700px;
    line-height: 50px;
    font-weight: 700;
}

.top-row {
    display: flex;
}

/* 我的 */
.top-mine {
    height: 228px;
    background: linear-gradient(180deg, #070a18, #070a16 60%, #0a0c1c);
    border: 2px solid transparent;
    border-bottom-color: #16233f;
    border-radius: 50px;
}

.top-mine .status {
    margin: 35px 39px 0 41px;
}

.top-mine .top-row {
    align-items: center;
    padding: 0 30px 0 32px;
    margin-top: 34px;
    gap: 29px;
}

.top-mine h1 {
    margin-right: auto;
    line-height: 64px;
    padding-bottom: 7px;
}

.round {
    width: 96px;
    height: 96px;
    border-radius: 50%;
    background: #10152b;
    color: #8f9bb8;
}

.bell { width: 34px; height: 39px; }
.gear { width: 38px; height: 38px; }

.balance-row {
    display: flex;
    gap: 38px;
    padding: 0 32px 0 33px;
    margin-top: -90px;
}

.balance {
    flex: 1;
    height: 349px;
    padding: 48px 48px 0;
    display: flex;
    flex-direction: column;
}

.ring {
    width: 71px;
    height: 71px;
    border-radius: 50%;
    border: 2px solid #1b2c55;
    background: #0b1427;
    display: flex;
    align-items: center;
    justify-content: center;
}

.balance .ring {
    align-self: flex-end;
}

.cash { width: 54px; height: 36px; color: #2f6fd8; }
.gem { width: 54px; height: 46px; color: #9347dc; }

.amount {
    font-size: 47.400px;
    line-height: 60px;
    font-weight: 600;
    margin-top: -15px;
}

.ghost {
    height: 87px;
    border-radius: 30px;
    background: #171c2f;
    font-size: 33.200px;
    color: #f1f4fa;
    margin-top: 46px;
    padding-bottom: 3px;
}

.ads {
    margin: 33px 32px 0 33px;
    height: 269px;
    padding: 68px 30px 0;
    display: flex;
}

.ad {
    flex: 1;
    display: flex;
    flex-direction: column;
    align-items: center;
    font-size: 28.400px;
    line-height: 36px;
    color: #e4e9f3;
}

.ad .ring {
    margin-bottom: 19px;
}

.blue { color: #3b82f6; }
.purple { color: #a855f7; }
.sky { color: #5ac8fa; }

.more {
    display: flex;
    align-items: center;
    gap: 21px;
    margin: 38px 0 0 34px;
    height: 50px;
    color: #eef1f8;
}

.more svg {
    color: #3f83ee;
    margin-top: 4px;
}

.services {
    margin: 51px 32px 0 33px;
    display: grid;
    grid-template-columns: 1fr 1fr;
    grid-auto-rows: 175px;
    border: 2px solid #1a2750;
    border-radius: 57px;
    background: #151a2f;
    box-shadow: 0 10px 40px rgba(0, 0, 0, .5);
}

.service {
    display: flex;
    align-items: center;
    padding: 0 40px 0 39px;
    border-right: 1px solid #192038;
    border-bottom: 1px solid #192038;
}

.service:nth-child(2n) { border-right: none; }
.service:nth-child(n+5) { border-bottom: none; }

.disc {
    width: 96px;
    height: 96px;
    border-radius: 50%;
    display: flex;
    align-items: center;
    justify-content: center;
}

.disc.teal { background: #132d45; color: #5ac8fa; }
.disc.navy { background: #182644; color: #3b82f6; }
.disc.violet { background: #251f42; color: #a855f7; }
.disc.grey { background: #2b2c30; color: #5ac8fa; }

.service-text {
    margin-left: 29px;
    flex: 1;
    display: flex;
    flex-direction: column;
    white-space: nowrap;
}

.service-text b {
    font-size: 37.900px;
    line-height: 50px;
    font-weight: 500;
    color: #f1f4fa;
    margin-top: -1px;
}

.service-text small {
    font-size: 28.400px;
    line-height: 42px;
    color: #7f879d;
    margin-top: 2px;
}

.chevron {
    width: 18px;
    height: 30px;
    color: #8f98b0;
    margin-top: -1px;
}

/* bottom tabs */
.tabbar {
    position: absolute;
    left: 22px;
    top: 1703px;
    width: 811px;
    height: 183px;
    border-radius: 92px;
    border: 2px solid #112b37;
    background: linear-gradient(180deg, #080a17, #060812);
    box-shadow: 0 0 50px rgba(0, 150, 190, .2);
    display: flex;
    padding: 36px 15px 0 13px;
}

.tab {
    flex: 1;
    display: flex;
    flex-direction: column;
    align-items: center;
    color: #8e98b4;
}

.tab span {
    margin-top: 21px;
    font-size: 23.700px;
    line-height: 36px;
    color: #8b91a7;
}

.tab.active {
    margin-top: -12px;
    color: #b5f1ff;
}

.tab.active svg {
    transform: scale(1.08);
    overflow: visible;
    filter: drop-shadow(0 0 10px rgba(70, 195, 255, .75)) drop-shadow(0 5px 22px rgba(40, 165, 235, .7));
}

.tab.active span {
    margin-top: 23px;
    font-weight: 500;
    background: linear-gradient(135deg, #a5f0ff, #8b8cff);
    -webkit-background-clip: text;
    background-clip: text;
    color: transparent;
}

.phone-ladder .tabbar { padding-top: 38px; }
.phone-home .tabbar { padding-top: 41px; }
.phone-home .tab span { margin-top: 23px; }

/* 阶梯中心 */
.top-ladder {
    height: 262px;
    background: #060a15;
    border-top: 2px solid #101e3d;
    border-bottom: 2px solid #0f1d36;
}

.top-ladder .status {
    margin: 35px 41px 0 42px;
}

.top-ladder .top-row {
    margin: 45px 34px 0 36px;
    gap: 29px;
}

.titles {
    margin-right: auto;
    padding-top: 5px;
}

.titles p {
    font-size: 28.400px;
    line-height: 40px;
    margin-top: 5px;
    color: #75798f;
}

.dot {
    font-family: "Noto Sans", sans-serif;
    margin: 0 7px;
}

.bubble {
    width: 108px;
    height: 108px;
    border-radius: 50%;
    flex-direction: column;
    font-size: 21.300px;
    line-height: 28px;
    gap: 4px;
    padding-bottom: 2px;
}

.bubble svg {
    width: 39px;
    height: 39px;
}

.bubble.pink { background: #32172f; border: 2px solid #7d3058; color: #f9a8d4; }
.bubble.pink svg { color: #f472b6; }
.bubble.blue { background: #0c1c3d; border: 2px solid #1b355f; color: #93c5fd; }
.bubble.blue svg { color: #60a5fa; }

.assets {
    margin: 38px 33px 0 33px;
    height: 571px;
    background: linear-gradient(180deg, #0d0c1f, #0b1023 35%, #0b1023 70%, #0d0c1f);
}

.assets-head {
    height: 185px;
    border-bottom: 2px solid #1a2750;
    display: flex;
    align-items: center;
    padding: 0 47px 2px 48px;
    color: #3b82f6;
}

.assets-head h2 {
    color: #fff;
    margin-left: 19px;
    padding-bottom: 4px;
}

.detail {
    margin-left: auto;
    color: #fff;
    width: 303px;
    height: 106px;
    font-size: 33.200px;
    gap: 19px;
}

.assets-body {
    display: flex;
    gap: 40px;
    padding: 38px 38px 0;
}

.asset {
    flex: 1;
    height: 306px;
    border: 2px solid #1a2750;
    border-radius: 57px;
    background: #0f1429;
    padding: 36px 0 0 39px;
}

.asset label, .stat label {
    display: block;
    font-size: 28.400px;
    line-height: 40px;
    color: #878b9e;
}

.num {
    font-size: 42.700px;
    line-height: 50px;
    font-weight: 600;
    letter-spacing: 1.500px;
    margin-top: 3px;
}

.asset .primary {
    width: 216px;
    height: 96px;
    font-size: 28.400px;
    gap: 18px;
    margin-top: 38px;
}

.asset .send {
    width: 219px;
}

.level {
    margin: 45px 33px 0 33px;
    height: 513px;
    border-radius: 40px;
    padding: 40px 38px 0;
}

.level-2 {
    margin-top: 37px;
    height: 600px;
}

.level-head {
    display: flex;
    align-items: center;
    gap: 20px;
    height: 62px;
}

.level-head h2 {
    padding-bottom: 4px;
}

.badge {
    height: 62px;
    padding: 0 29px;
    border: 2px solid #203464;
    border-radius: 30px;
    background: #142044;
    color: #5b9bf3;
    font-size: 27.500px;
    line-height: 56px;
}

.stats {
    display: flex;
    gap: 29px;
    margin-top: 52px;
}

.stat {
    flex: 1;
    height: 177px;
    border: 2px solid #1a2750;
    border-radius: 57px;
    background: #0f1429;
    text-align: center;
    padding-top: 27px;
}

.stat b {
    display: block;
    font-size: 36.500px;
    line-height: 50px;
    margin-top: 17px;
}

.stat b.hl {
    color: #4080ee;
}

.level-foot {
    display: flex;
    align-items: center;
    justify-content: space-between;
    margin-top: 48px;
}

.expire {
    display: flex;
    align-items: center;
    gap: 17px;
    width: 315px;
    height: 53px;
    padding: 0 0 3px 14px;
    border: 2px solid #203464;
    border-radius: 27px;
    background: #13204a;
    color: #60a5fa;
    font-size: 25.300px;
    white-space: nowrap;
}

.claimed {
    width: 253px;
    height: 91px;
    border: 2px solid #1a2750;
    border-radius: 46px;
    background: #0f1429;
    color: #878b9e;
    font-size: 33.200px;
    padding-bottom: 4px;
}

.join-row {
    display: flex;
    justify-content: flex-end;
    margin-top: 55px;
}

.join {
    width: 246px;
    height: 96px;
    background: linear-gradient(180deg, #4fb4e4, #3a8fc8);
    color: #cfdde2;
    font-size: 37.900px;
    font-weight: 500;
    gap: 20px;
    box-shadow: 0 0 30px rgba(56, 170, 230, .3);
}

.floaty {
    position: absolute;
    left: 33px;
    width: 132px;
    height: 132px;
    border-radius: 50%;
    display: flex;
    align-items: center;
    justify-content: center;
}

.floaty svg {
    filter: drop-shadow(0 4px 5px rgba(0, 0, 0, .3));
}

.newbie {
    top: 654px;
    background: linear-gradient(135deg, #a855f7, #7e22ce);
    border: 5px solid #a95cf0;
    box-shadow: 0 10px 50px rgba(168, 85, 247, .5);
}

.daily {
    top: 860px;
    background: linear-gradient(135deg, #5ac8fa, #3f93cd);
    border: 5px solid #4fb9ea;
    box-shadow: 0 8px 60px rgba(20, 190, 225, .55);
}

.floaty span {
    position: absolute;
    left: 29px;
    top: -31px;
    width: 125px;
    height: 48px;
    border-radius: 20px;
    background: #fff;
    transform: rotate(13deg);
    font-size: 20.500px;
    font-weight: 700;
    line-height: 45px;
    text-align: center;
    color: #9a40dd;
}

.floaty.daily span { color: #3eb0e6; }

/* 首页 */
.phone-home {
    width: 854px;
    background: #060914;
}

.top-home {
    height: 258px;
    background: linear-gradient(180deg, #050815, #020309);
    border-bottom: 2px solid #16294a;
}

.search {
    margin: 46px 33px 0 33px;
    height: 115px;
    border: 2px solid #1a2a52;
    border-radius: 38px;
    background: #0c1024;
    display: flex;
    align-items: center;
    padding: 0 14px 0 49px;
    font-size: 37.900px;
    color: #777c92;
}

.search span {
    padding-bottom: 3px;
    letter-spacing: .3px;
}

.search .primary {
    width: 168px;
    height: 81px;
    margin-left: auto;
    margin-bottom: 2px;
    font-size: 35.500px;
    color: #fff;
}

.headline {
    position: relative;
    margin: 43px 31px 0 33px;
    height: 545px;
    border: 2px solid #142f5a;
    border-radius: 70px;
    background: linear-gradient(170deg, #080b1a 0%, #03050e 40%, #010206 100%);
    box-shadow: 0 0 70px 22px rgba(22, 58, 125, .42);
    padding: 50px 48px 0;
}

/* corner ribbon */
.headline::before {
    content: "";
    position: absolute;
    right: 0;
    top: 0;
    width: 168px;
    height: 168px;
    border-top-right-radius: 68px;
    background: linear-gradient(135deg, #182c5a, #12203f);
    clip-path: polygon(0 0, 100% 0, 100% 100%);
}

.post-head {
    position: relative;
    display: flex;
}

.avatar {
    display: flex;
    align-items: center;
    justify-content: center;
    border-radius: 50%;
    background: linear-gradient(165deg, #2c3940 5%, #18222a 40%, #0a100f 62%);
    flex: none;
}

.headline .avatar {
    width: 111px;
    height: 111px;
    border: 5px solid #2a549f;
    box-shadow: 0 4px 24px 3px rgba(40, 100, 230, .5);
    margin: 14px 0 0 3px;
}

.avatar em {
    font-size: 18.500px;
    line-height: 22px;
    font-weight: 900;
    transform: scaleY(1.250);
    white-space: nowrap;
    padding-bottom: 1px;
}

.avatar i {
    color: #2f8f7c;
}

.who {
    margin-left: 43px;
    display: flex;
    flex-direction: column;
    align-items: flex-start;
}

.headline .who b {
    font-size: 42.700px;
    line-height: 60px;
    font-weight: 500;
    margin-top: 3px;
    color: #f3f5fa;
}

.when {
    display: flex;
    align-items: center;
    border: 2px solid #18294d;
    white-space: nowrap;
}

.headline .when {
    height: 50px;
    width: 333px;
    padding: 0 0 1px 22px;
    gap: 17px;
    border-radius: 25px;
    background: #0a1124;
    color: #4079dd;
    font-size: 26.400px;
    margin-top: 11px;
}

.toutiao {
    margin-left: auto;
    margin-top: 2px;
    width: 174px;
    height: 84px;
    display: flex;
    align-items: center;
    justify-content: center;
    gap: 17px;
    border: 2px solid #1f4280;
    border-radius: 42px;
    background: #101f43cc;
    box-shadow: 0 0 22px rgba(40, 100, 220, .35);
    font-size: 28.400px;
    color: #3b82f6;
}

.headline p {
    position: relative;
    font-size: 37.900px;
    line-height: 57.500px;
    font-weight: 500;
    color: #f1f3f9;
    width: 690px;
    height: 115px;
    margin: 52px 0 0 -1px;
}

.post-foot {
    display: flex;
    justify-content: space-between;
}

.tag, .views {
    display: flex;
    align-items: center;
    justify-content: center;
}

.headline .post-foot {
    margin-top: 63px;
}

.headline .tag, .headline .views {
    height: 88px;
    border: 2px solid #182c55;
    border-radius: 44px;
    font-size: 31px;
    color: #4080ea;
    gap: 19px;
    padding-bottom: 2px;
}

.headline .tag {
    width: 258px;
    background: #0d1a38;
    box-shadow: 0 8px 26px rgba(30, 80, 180, .25);
}

.headline .views {
    width: 231px;
    background: #070f21;
    gap: 22px;
    box-shadow: 0 4px 16px rgba(30, 80, 180, .15);
}

.post {
    position: relative;
    margin: 48px 23px 0 25px;
    height: 562px;
    border: 2px solid #1a2750;
    border-radius: 68px;
    background: #0d1023;
    padding: 54px 58px 0 57px;
}

.post-last {
    margin-top: 36px;
}

.post .avatar {
    width: 106px;
    height: 106px;
    border: 3px solid #4584e8;
    box-shadow: 0 0 0 5px #142652, 0 0 0 7px #213a70;
    margin: 7px 0 0 7px;
}

.post .who {
    margin-left: 45px;
}

.post .who b {
    font-family: "Noto Serif CJK SC", "Noto Sans CJK SC", serif;
    font-size: 40.500px;
    line-height: 44px;
    font-weight: 300;
    color: #eef0f6;
    margin-top: -4px;
}

.post .when {
    height: 53px;
    width: 252px;
    margin-top: 12px;
    padding: 0 0 1px 20px;
    gap: 13px;
    border-radius: 27px;
    font-size: 26.300px;
    color: #757a90;
}

.post .when svg {
    color: #3d7ce6;
}

.post > p {
    font-size: 40.500px;
    line-height: 78px;
    width: 700px;
    margin-top: 57px;
    height: 156px;
    font-weight: 500;
    white-space: nowrap;
}

.tail {
    display: block;
    width: 648px;
    text-align: right;
}

.post .post-foot {
    margin-top: 53px;
}

.post .tag, .post .views {
    height: 76px;
    border-radius: 38px;
    font-size: 28.600px;
    gap: 17px;
    border: 2px solid #182648;
    color: #8790a8;
}

.post .tag {
    width: 234px;
    background: #20163a;
    border-color: #402a63;
    color: #a25af0;
}

.post .views {
    width: 265px;
}

.publish {
    position: absolute;
    left: 656px;
    top: 1465px;
    width: 168px;
    height: 168px;
    border-radius: 50%;
    background: linear-gradient(135deg, #2563eb, #7c3aed);
    box-shadow: 0 10px 45px rgba(37, 99, 235, .45);
    font-size: 37.900px;
    font-weight: 700;
    padding-bottom: 5px;
}

/* markers drawn over the three screens */
.marks {
    position: absolute;
    left: 0;
    top: 0;
    width: 2560px;
    height: 1920px;
}

.note {
    position: absolute;
    left: 1749px;
    top: 1116px;
    width: 705px;
    height: 172px;
}

.note svg {
    position: absolute;
    width: 705px;
    height: 172px;
    fill: #a0fa87;
    stroke: #5b9b4c;
    stroke-width: 1.500px;
}

.note p {
    position: relative;
    width: 700px;
    padding-top: 22px;
    text-align: center;
    font-size: 40.700px;
    line-height: 41px;
    color: #dc5f5a;
}
```
